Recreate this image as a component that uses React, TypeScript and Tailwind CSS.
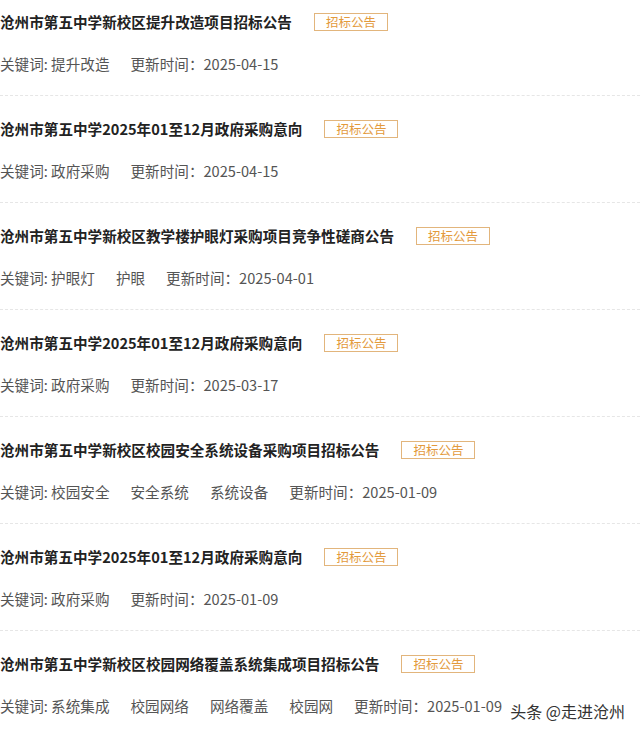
import React from 'react';

type Item = {
  title: string;
  keywords: string[];
  date: string;
};

const items: Item[] = [
  { title: '沧州市第五中学新校区提升改造项目招标公告', keywords: ['提升改造'], date: '2025-04-15' },
  { title: '沧州市第五中学2025年01至12月政府采购意向', keywords: ['政府采购'], date: '2025-04-15' },
  { title: '沧州市第五中学新校区教学楼护眼灯采购项目竞争性磋商公告', keywords: ['护眼灯', '护眼'], date: '2025-04-01' },
  { title: '沧州市第五中学2025年01至12月政府采购意向', keywords: ['政府采购'], date: '2025-03-17' },
  { title: '沧州市第五中学新校区校园安全系统设备采购项目招标公告', keywords: ['校园安全', '安全系统', '系统设备'], date: '2025-01-09' },
  { title: '沧州市第五中学2025年01至12月政府采购意向', keywords: ['政府采购'], date: '2025-01-09' },
  { title: '沧州市第五中学新校区校园网络覆盖系统集成项目招标公告', keywords: ['系统集成', '校园网络', '网络覆盖', '校园网'], date: '2025-01-09' },
];

const font = { fontFamily: '"Noto Sans CJK SC", "Noto Sans", sans-serif' };

const Row = ({ item }: { item: Item }) => (
  <div className="flex flex-col pt-[22px] first:pt-[11px] pb-[20px] border-b border-dashed border-[#e6e6e6]">
    <div className="flex items-center h-[22px]">
      <span className="text-[14.6px] font-bold text-[#222] leading-[22px] whitespace-nowrap">{item.title}</span>
      <span className="ml-[22px] h-[18px] w-[74px] flex items-center justify-center border border-[#e2b57c] text-[#e39a3c] text-[12.5px] leading-none">
        招标公告
      </span>
    </div>
    <div className="flex items-center h-[22px] mt-[20px] text-[14.6px] text-[#555] leading-[22px] whitespace-nowrap">
      <span>关键词:&nbsp;</span>
      {item.keywords.map((k, i) => (
        <span key={i} className="mr-[21px]">{k}</span>
      ))}
      <span>更新时间：{item.date}</span>
    </div>
  </div>
);

export default function App() {
  return (
    <div className="relative w-[640px] h-[734px] overflow-hidden bg-white" style={font}>
      <div className="flex flex-col">
        {items.map((item, i) => (
          <Row key={i} item={item} />
        ))}
      </div>
      <div className="absolute right-[15px] top-[699px] text-[16px] text-[#333] leading-[24px] whitespace-nowrap">
        头条 @走进沧州
      </div>
    </div>
  );
}
